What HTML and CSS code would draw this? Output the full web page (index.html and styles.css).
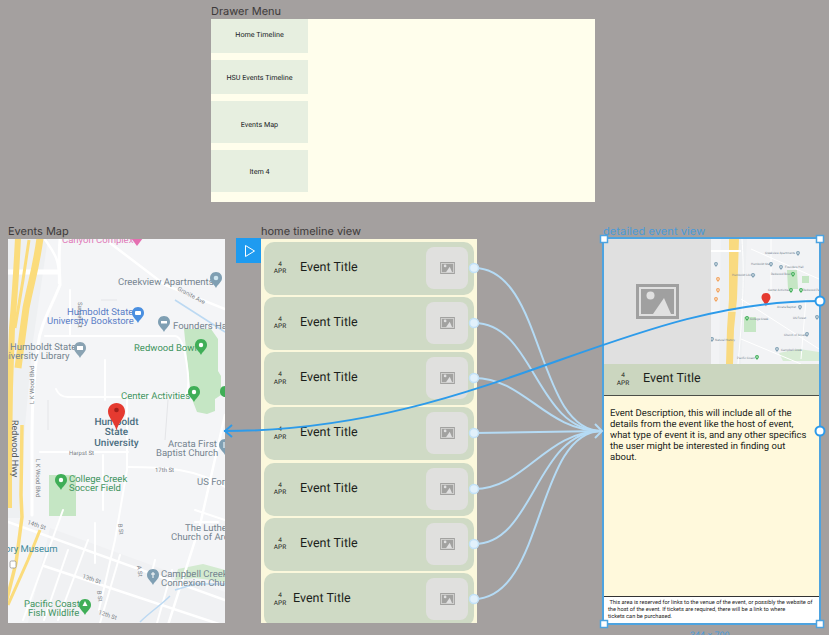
FILE: index.html
```html
<!DOCTYPE html>
<html lang="en">
<head>
  <meta charset="UTF-8">
  <title>Event App Wireframes</title>
  <link rel="stylesheet" href="styles.css">
</head>
<body>
  <svg class="icon-defs" width="0" height="0">
    <symbol id="placeholder" viewBox="0 0 43 35">
      <rect x="1.5" y="1.5" width="40" height="32" fill="none" stroke="currentColor" stroke-width="3"/>
      <path fill="currentColor" d="M5 5h33v25H5z"/>
      <circle cx="14.5" cy="11.5" r="4" fill="#e0e0e0"/>
      <path fill="#e0e0e0" d="M28 14l7 16H17z"/>
    </symbol>
    <symbol id="mpin" viewBox="0 0 12 16">
      <path fill="currentColor" d="M6 0c4 0 6 3 6 6 0 4-4 6-6 10-2-4-6-6-6-10 0-3 2-6 6-6z"/>
      <circle cx="6" cy="6" r="2.4" fill="#fff"/>
    </symbol>
  </svg>

  <div class="canvas">
    <!-- Drawer Menu -->
    <section class="frame drawer-frame">
      <div class="frame-label">Drawer Menu</div>
      <div class="drawer">
        <div class="drawer-item short up">Home Timeline</div>
        <div class="drawer-item short">HSU Events Timeline</div>
        <div class="drawer-item tall down">Events Map</div>
        <div class="drawer-item tall">Item 4</div>
      </div>
    </section>

    <!-- Events Map -->
    <section class="frame map-frame">
      <div class="frame-label">Events Map</div>
      <svg class="map" viewBox="8 239 217 384" width="217" height="384">
        <rect x="8" y="239" width="217" height="384" fill="#f4f5f7"/>
        <path fill="#f0f1f3" d="M50 528L225 592V623H28z"/>
        <path fill="#eef0f2" d="M8 238h40l-16 110-8 90-2 80-14 0z"/>
        <!-- park areas -->
        <path fill="#c5e6c4" d="M184 329h27l7 10v32l3 5v19l-6 4v12l-8 3-10-2-5-13-3-20z"/>
        <path fill="#c5e6c4" d="M49 475h27v41H49z"/>
        <path fill="#d3ead0" d="M178 569l25-5 22 6v12l-30-4-20 2z"/>
        <!-- roads -->
        <g fill="none" stroke="#fff" stroke-linecap="round">
          <path stroke-width="5" d="M8 272h50"/>
          <path stroke-width="3" d="M60 240c-2 20 0 35 0 45-10 25-20 40-22 60-4 30-6 60-6 90v80"/>
          <path stroke-width="2.5" d="M44 238c10 15 16 20 15 45"/>
          <path stroke-width="2.5" d="M110 243l55 42 60 24"/>
          <path stroke-width="2" d="M45 336h130c6 0 10 14 12 30 2 14 2 28-4 31h-115c-6 0-10-3-12-8"/>
          <path stroke-width="2" d="M70 290v46"/>
          <path stroke-width="2" d="M105 360v40"/>
          <path stroke-width="2" d="M127 400v70l-12 70-16 70"/>
          <path stroke-width="2.5" d="M8 522l217 78"/>
          <path stroke-width="2.5" d="M44 566l181 60"/>
          <path stroke-width="2" d="M40 452h88"/>
          <path stroke-width="2" d="M127 467c40 0 70 2 98 20"/>
          <path stroke-width="2.5" d="M225 415l-25 110-32 100"/>
          <path stroke-width="2" d="M218 522l-23 0M195 510l30 10"/>
          <path stroke-width="2" d="M95 523v40M63 510l-40 110"/>
          <path stroke-width="2" d="M68 550l-24 70M88 540l-30 80M120 555l-20 68M155 560l-5 20M172 570l-15 53"/>
          <path stroke-width="2" d="M103 455v55"/>
        </g>
        <path fill="none" stroke="#e4e5e8" d="M48 400v30M168 400l-3 40M101 300h16"/>
        <!-- highway -->
        <g fill="none" stroke="#fbdc7c">
          <path stroke-width="6" d="M18 238c-2 40-3 55-6 90l-2 60-1 70v50"/>
          <path stroke-width="7" d="M40 238c-4 30-8 40-14 70l-8 60"/>
          <path stroke-width="3" d="M29 240l-6 40-8 48"/>
          <path stroke-width="3.5" d="M22 425l-1 70 1 22-6 46-10 40"/>
          <path stroke-width="3" d="M40 530l-12 30-20 45"/>
        </g>
        <!-- water -->
        <path fill="none" stroke="#bcd9f2" stroke-width="1.5" d="M175 300l50 32M140 622c10-10 20-16 30-26M175 590l20-6 30 0"/>
        <g class="lbl-grey" font-size="9.5">
          <text x="118" y="285">Creekview Apartments</text>
          <text x="173" y="329">Founders Hall</text>
          <text x="10" y="349.500">Humboldt State</text>
          <text x="-3" y="358.500">University Library</text>
          <text x="168" y="447">Arcata First</text>
          <text x="156" y="456">Baptist Church</text>
          <text x="197" y="484.500">US Forest</text>
          <text x="185" y="531">The Lutheran</text>
          <text x="171" y="540">Church of Arcata</text>
          <text x="161" y="577">Campbell Creek</text>
          <text x="161" y="586">Connexion Church</text>
        </g>
        <g class="lbl-small" font-size="6">
          <text transform="translate(177 290) rotate(28)">Granite Ave</text>
          <text transform="translate(78 302) rotate(90)">Sunset Ct</text>
          <text transform="translate(34 404) rotate(-90)">L K Wood Blvd</text>
          <text transform="translate(36 459) rotate(90)">L K Wood Blvd</text>
          <text x="69" y="455">Harpst St</text>
          <text x="155" y="472">17th St</text>
          <text transform="translate(27 524) rotate(18)">14th St</text>
          <text transform="translate(82 578) rotate(18)">13th St</text>
          <text transform="translate(98 614) rotate(18)">12th St</text>
          <text transform="translate(118 524) rotate(82)">B St</text>
          <text transform="translate(97 591) rotate(82)">B St</text>
          <text transform="translate(137 566) rotate(82)">A St</text>
        </g>
        <text class="lbl-road" transform="translate(12 420) rotate(90)" font-size="9">Redwood Hwy</text>
        <g class="lbl-blue" font-size="9.5">
          <text x="67" y="315">Humboldt State</text>
          <text x="47" y="324">University Bookstore</text>
        </g>
        <g class="lbl-green" font-size="9.5">
          <text x="134" y="351">Redwood Bowl</text>
          <text x="121" y="399">Center Activities</text>
          <text x="69" y="482">College Creek</text>
          <text x="69" y="491">Soccer Field</text>
          <text x="24" y="606.500">Pacific Coast</text>
          <text x="28" y="616">Fish Wildlife</text>
        </g>
        <text class="lbl-teal" x="-12" y="552" font-size="9.5">History Museum</text>
        <g class="lbl-main" font-size="10" text-anchor="middle">
          <text x="116.500" y="425">Humboldt</text>
          <text x="116.500" y="435">State</text>
          <text x="116.500" y="446">University</text>
        </g>
        <text class="lbl-pink" x="62" y="243" font-size="9.5">Canyon Complex</text>
        <path fill="#e56fb1" d="M131 238h12l-6 8z"/>
        <!-- pins -->
        <path fill="#7f9fb3" d="M216 272c4 0 6 3 6 6 0 4-4 6-6 10-2-4-6-6-6-10 0-3 2-6 6-6z"/>
        <circle cx="216" cy="278" r="2.3" fill="#cfe6f0"/>
        <path fill="#4a8fe0" d="M138 307c4 0 6 3 6 6 0 4-4 6-6 10-2-4-6-6-6-10 0-3 2-6 6-6z"/>
        <rect x="135" y="311" width="6" height="4" rx="1" fill="#fff"/>
        <path fill="#7f9fb3" d="M164 316c4 0 6 3 6 6 0 4-4 6-6 10-2-4-6-6-6-10 0-3 2-6 6-6z"/>
        <rect x="161" y="321" width="6" height="2.5" fill="#fff"/>
        <path fill="#8aa3b3" d="M80 342c4 0 6 3 6 6 0 4-4 6-6 10-2-4-6-6-6-10 0-3 2-6 6-6z"/>
        <rect x="77" y="346" width="6" height="4" fill="#fff"/>
        <path fill="#3fae57" d="M201 339c4 0 6 3 6 6 0 4-4 6-6 10-2-4-6-6-6-10 0-3 2-6 6-6z"/>
        <circle cx="201" cy="345" r="2.2" fill="#fff"/>
        <path fill="#3fae57" d="M194 386c4 0 6 3 6 6 0 4-4 6-6 10-2-4-6-6-6-10 0-3 2-6 6-6z"/>
        <circle cx="194" cy="392" r="2.2" fill="#fff"/>
        <path fill="#3fae57" d="M225 386c-4 0-5 3-5 6s3 5 5 5z"/>
        <path fill="#3fae57" d="M61 474c4 0 6 3 6 6 0 4-4 6-6 10-2-4-6-6-6-10 0-3 2-6 6-6z"/>
        <circle cx="61" cy="480" r="2.2" fill="#fff"/>
        <path fill="#7f9fb3" d="M153 569c4 0 6 3 6 6 0 4-4 6-6 10-2-4-6-6-6-10 0-3 2-6 6-6z"/>
        <path stroke="#fff" d="M153 572v6M151 574h4"/>
        <path fill="#7f9fb3" d="M225 439c-4 0-6 3-6 6 0 4 4 6 6 10z"/>
        <path stroke="#fff" d="M224 442v6"/>
        <path fill="#3fae57" d="M85 599c4 0 6 3 6 6 0 4-4 6-6 10-2-4-6-6-6-10 0-3 2-6 6-6z"/>
        <path fill="#fff" d="M85 601l2.500 5h-5z"/>
        <rect x="10" y="561" width="6" height="7" rx="1.500" fill="#fff" stroke="#888" stroke-width=".7"/>
        <!-- main red pin -->
        <path fill="#e53a30" d="M116.500 403c5 0 8.500 4 8.500 8.500 0 6-6 10-8.500 19-2.500-9-8.500-13-8.500-19 0-4.500 3.500-8.500 8.500-8.500z"/>
        <circle cx="116.500" cy="410" r="2.300" fill="#a31f1a"/>
      </svg>
    </section>

    <!-- home timeline view -->
    <section class="frame home-frame">
      <div class="frame-label">home timeline view</div>
      <div class="timeline">
        <div class="event-row">
          <div class="date"><span>4</span><span>APR</span></div>
          <div class="event-title">Event Title</div>
          <div class="thumb"><svg width="15" height="12"><use href="#placeholder"/></svg></div>
        </div>
        <div class="event-row">
          <div class="date"><span>4</span><span>APR</span></div>
          <div class="event-title">Event Title</div>
          <div class="thumb"><svg width="15" height="12"><use href="#placeholder"/></svg></div>
        </div>
        <div class="event-row">
          <div class="date"><span>4</span><span>APR</span></div>
          <div class="event-title">Event Title</div>
          <div class="thumb"><svg width="15" height="12"><use href="#placeholder"/></svg></div>
        </div>
        <div class="event-row">
          <div class="date"><span>4</span><span>APR</span></div>
          <div class="event-title">Event Title</div>
          <div class="thumb"><svg width="15" height="12"><use href="#placeholder"/></svg></div>
        </div>
        <div class="event-row">
          <div class="date"><span>4</span><span>APR</span></div>
          <div class="event-title">Event Title</div>
          <div class="thumb"><svg width="15" height="12"><use href="#placeholder"/></svg></div>
        </div>
        <div class="event-row">
          <div class="date"><span>4</span><span>APR</span></div>
          <div class="event-title">Event Title</div>
          <div class="thumb"><svg width="15" height="12"><use href="#placeholder"/></svg></div>
        </div>
        <div class="event-row last">
          <div class="date"><span>4</span><span>APR</span></div>
          <div class="event-title">Event Title</div>
          <div class="thumb"><svg width="15" height="12"><use href="#placeholder"/></svg></div>
        </div>
      </div>
    </section>

    <!-- detailed event view -->
    <section class="frame detail-frame">
      <div class="frame-label selected">detailed event view</div>
      <div class="detail">
        <div class="detail-top">
          <div class="detail-image"><svg width="43" height="35"><use href="#placeholder"/></svg></div>
          <svg class="mini-map" viewBox="0 0 108 125" width="108" height="125">
            <rect width="108" height="125" fill="#f2f3f5"/>
            <path fill="#eef0f2" d="M10 0h26l-6 125H8z"/>
            <path fill="#c5e6c4" d="M76 31h10l1 19H77zM91 37h7v7h-7zM33 78h12v15H33z"/>
            <path fill="#d8ecd5" d="M68 114l20-4 20 3v9H72z"/>
            <path fill="#f9da80" d="M18 0h10l-2 60-3 30-1 35h-7l1-35 2-30z"/>
            <path fill="#fff" d="M0 11h30v2H0z"/>
            <g fill="none" stroke="#fff" stroke-width="1">
              <path d="M31 0c2 30 2 60-4 125M40 10l68 30M30 60l78 50M60 0v60M0 72h25M30 100l60 25M95 60l-5 60"/>
            </g>
            <g font-size="3" class="lbl-grey">
              <text x="54" y="15">Creekview Apartments</text>
              <text x="40" y="26">Humboldt State</text>
              <text x="74" y="29">Founders Hall</text>
              <text x="21" y="37">Humboldt Library</text>
              <text x="60" y="36">Redwood Bowl</text>
              <text x="57" y="52">Center Activities</text>
              <text x="92" y="52">Redwood Park</text>
              <text x="66" y="69">Arcata Baptist</text>
              <text x="82" y="80">US Forest</text>
              <text x="73" y="97">Church of Arcata</text>
              <text x="39" y="81">College Creek</text>
              <text x="4" y="102">Natural History</text>
              <text x="70" y="112">Campbell Creek</text>
              <text x="26" y="120">Pacific Coast</text>
            </g>
            <g class="pins-orange">
              <use href="#mpin" x="5" y="38" width="4" height="5"/>
              <use href="#mpin" x="5" y="49" width="4" height="5"/>
              <use href="#mpin" x="3" y="58" width="4" height="5"/>
            </g>
            <g class="pins-green">
              <use href="#mpin" x="80" y="33" width="4" height="5"/>
              <use href="#mpin" x="78" y="49" width="4" height="5"/>
              <use href="#mpin" x="88" y="49" width="4" height="5"/>
              <use href="#mpin" x="34" y="77" width="4" height="5"/>
              <use href="#mpin" x="44" y="116" width="4" height="5"/>
            </g>
            <g class="pins-grey">
              <use href="#mpin" x="85" y="12" width="4" height="5"/>
              <use href="#mpin" x="58" y="23" width="4" height="5"/>
              <use href="#mpin" x="68" y="26" width="4" height="5"/>
              <use href="#mpin" x="40" y="34" width="4" height="5"/>
              <use href="#mpin" x="3" y="23" width="4" height="5"/>
              <use href="#mpin" x="87" y="66" width="4" height="5"/>
              <use href="#mpin" x="104" y="76" width="4" height="5"/>
              <use href="#mpin" x="94" y="93" width="4" height="5"/>
              <use href="#mpin" x="64" y="108" width="4" height="5"/>
              <use href="#mpin" x="-1" y="98" width="4" height="5"/>
            </g>
            <path fill="#e53a30" d="M55 54c3 0 4.500 2 4.500 4.500 0 3-3.500 5-4.500 9-1-4-4.500-6-4.500-9 0-2.500 1.500-4.500 4.500-4.500z"/>
          </svg>
        </div>
        <div class="detail-head">
          <div class="date"><span>4</span><span>APR</span></div>
          <div class="event-title">Event Title</div>
        </div>
        <p class="detail-desc">Event Description, this will include all of the details from the event like the host of event, what type of event it is, and any other specifics the user might be interested in finding out about.</p>
        <p class="detail-foot">&nbsp;This area is reserved for links to the venue of the event, or possibly the website of the host of the event. If tickets are required, there will be a link to where<br>tickets can be purchased.</p>
      </div>
    </section>

    <div class="size-tag">344 × 700</div>
    <button class="play-btn" aria-label="Present">
      <svg width="12" height="14" viewBox="0 0 12 14"><path d="M1.500 1.500v11l9-5.500z" fill="none" stroke="#fff" stroke-width="1"/></svg>
    </button>

    <!-- prototype connections -->
    <svg class="wires" width="829" height="635" viewBox="0 0 829 635">
      <g fill="none" stroke="#b5dbf5" stroke-width="2">
        <path d="M474 268C545 268 535 431 602 431"/>
        <path d="M474 323C535 323 535 431 602 431"/>
        <path d="M474 378C525 378 545 431 602 431"/>
        <path d="M474 433L602 431"/>
        <path d="M474 489C525 489 545 431 602 431"/>
        <path d="M474 544C535 544 535 431 602 431"/>
        <path d="M474 599C545 599 535 431 602 431"/>
        <path d="M595 424l7 7-7 7"/>
      </g>
      <g fill="#e2f1fb" stroke="#c2e1f7" stroke-width="1.500">
        <circle cx="474" cy="268" r="4.500"/>
        <circle cx="474" cy="323" r="4.500"/>
        <circle cx="474" cy="378" r="4.500"/>
        <circle cx="474" cy="433" r="4.500"/>
        <circle cx="474" cy="489" r="4.500"/>
        <circle cx="474" cy="544" r="4.500"/>
        <circle cx="474" cy="599" r="4.500"/>
      </g>
      <g fill="none" stroke="#2d9bea" stroke-width="2">
        <path d="M820 301C620 301 480 431 224 431"/>
        <path d="M232 425l-7 6 7 6"/>
      </g>
      <g fill="#fff" stroke="#2d9bea" stroke-width="2">
        <circle cx="820" cy="301" r="4.500"/>
        <circle cx="820" cy="431" r="4.500"/>
      </g>
      <g fill="#fff" stroke="#4da3e0" stroke-width="1.500">
        <rect x="600.500" y="235.500" width="7" height="7"/>
        <rect x="816.500" y="235.500" width="7" height="7"/>
        <rect x="600.500" y="620.500" width="7" height="7"/>
        <rect x="816.500" y="620.500" width="7" height="7"/>
      </g>
    </svg>
  </div>
</body>
</html>
```

FILE: styles.css
```css
* {
  box-sizing: border-box;
}
html, body {
  margin: 0;
  height: 100%;
  overflow: hidden;
}
body {
  font-family: Roboto, "Liberation Sans", sans-serif;
  text-rendering: geometricPrecision;
  background: #a4a09f;
  color: #1c1f1b;
}
.icon-defs {
  position: absolute;
}
.canvas {
  position: relative;
  width: 829px;
  height: 635px;
  overflow: hidden;
}

/* frames sit on a free canvas, like in the design tool */
.frame {
  position: absolute;
}
.drawer-frame {
  left: 211px;
  top: 19px;
  width: 384px;
  height: 183px;
}
.map-frame {
  left: 8px;
  top: 239px;
  width: 217px;
  height: 384px;
}
.home-frame {
  left: 261px;
  top: 239px;
  width: 216px;
  height: 384px;
}
.detail-frame {
  left: 602px;
  top: 237px;
  width: 219px;
  height: 388px;
}
.frame-label {
  position: absolute;
  left: 0;
  top: -15px;
  font-family: Inter, Roboto, sans-serif;
  font-size: 11px;
  line-height: 14px;
  color: #3d3a3a;
  white-space: nowrap;
}
.frame-label.selected {
  left: 1px;
  top: -13px;
  color: #4a9ad8;
  letter-spacing: 0.1px;
}

/* drawer */
.drawer {
  display: flex;
  flex-direction: column;
  gap: 7px;
  height: 100%;
  width: 100%;
  background: #fffeec;
}
.drawer-item {
  width: 97px;
  display: flex;
  align-items: center;
  justify-content: center;
  background: #e7efe0;
  font-size: 7.200px;
  color: #20231f;
}
.drawer-item.short {
  height: 34px;
}
.drawer-item.tall {
  height: 42px;
}
.drawer-item.up {
  padding-bottom: 3px;
}
.drawer-item.down {
  padding-top: 4px;
}

/* map */
.map {
  display: block;
}
.map text {
  font-family: Roboto, sans-serif;
}
.lbl-grey { fill: #74848f; }
.lbl-small { fill: #7b8287; }
.lbl-road { fill: #55585a; }
.lbl-blue { fill: #5b7fc7; }
.lbl-green { fill: #3f9460; }
.lbl-teal { fill: #3f8a9c; }
.lbl-main { fill: #4a6d80; font-weight: 500; }
.lbl-pink { fill: #e07ab8; }
.pins-orange { color: #f2a25c; }
.pins-green { color: #3fae57; }
.pins-grey { color: #7f9fb3; }

/* home timeline */
.timeline {
  height: 100%;
  background: #fbf8dc;
  padding: 2.500px 3px 0;
  display: flex;
  flex-direction: column;
  gap: 2.300px;
  overflow: hidden;
}
.event-row {
  flex: none;
  height: 53px;
  display: flex;
  align-items: center;
  background: #cfdac5;
  border-radius: 10px;
  padding: 0 6px 0 0;
}
.date {
  flex: none;
  width: 32px;
  display: flex;
  flex-direction: column;
  align-items: center;
  font-size: 6.500px;
  line-height: 7.500px;
  color: #1c1f1b;
}
.event-title {
  font-size: 12.500px;
  color: #1c1f1b;
  margin-left: 4px;
  margin-bottom: 2px;
}
.thumb {
  margin-left: auto;
  margin-bottom: 1px;
  width: 42px;
  height: 42px;
  border-radius: 8px;
  background: #e0e0de;
  color: #a2a2a0;
  display: flex;
  align-items: center;
  justify-content: center;
}
.event-row.last .event-title {
  margin-left: -3px;
}

/* detail */
.detail {
  width: 100%;
  height: 100%;
  border: 2px solid #4da3e0;
  background: #fff9dc;
  display: flex;
  flex-direction: column;
}
.detail-top {
  display: flex;
  flex: none;
  height: 125px;
}
.detail-image {
  flex: 1;
  background: #e0e0e0;
  color: #a0a0a0;
  display: flex;
  align-items: center;
  justify-content: center;
}
.mini-map {
  flex: none;
  display: block;
}
.mini-map text {
  font-family: Roboto, sans-serif;
}
.detail-head {
  flex: none;
  height: 32px;
  display: flex;
  align-items: center;
  background: #cbd6bf;
  border-bottom: 1px solid #4c4f48;
}
.detail-head .date {
  width: 38px;
}
.detail-head .event-title {
  margin-left: 1px;
}
.detail-desc {
  flex: 1;
  margin: 0;
  padding: 12px 11px 0 6px;
  font-size: 9.500px;
  line-height: 11.100px;
  color: #1c1f1b;
}
.detail-foot {
  flex: none;
  height: 27px;
  margin: 0;
  padding: 3px 3px 0 4px;
  background: #fff;
  border-top: 1px solid #333;
  font-size: 5.650px;
  line-height: 6.800px;
  color: #222;
}
.size-tag {
  position: absolute;
  left: 690px;
  top: 631px;
  font-size: 9px;
  line-height: 10px;
  color: #4a9ad8;
}
.play-btn {
  position: absolute;
  left: 236px;
  top: 238px;
  width: 25px;
  height: 25px;
  padding: 0 0 0 2px;
  border: 0;
  background: #1e9bf0;
  display: flex;
  align-items: center;
  justify-content: center;
}
.wires {
  position: absolute;
  left: 0;
  top: 0;
  pointer-events: none;
}
```
